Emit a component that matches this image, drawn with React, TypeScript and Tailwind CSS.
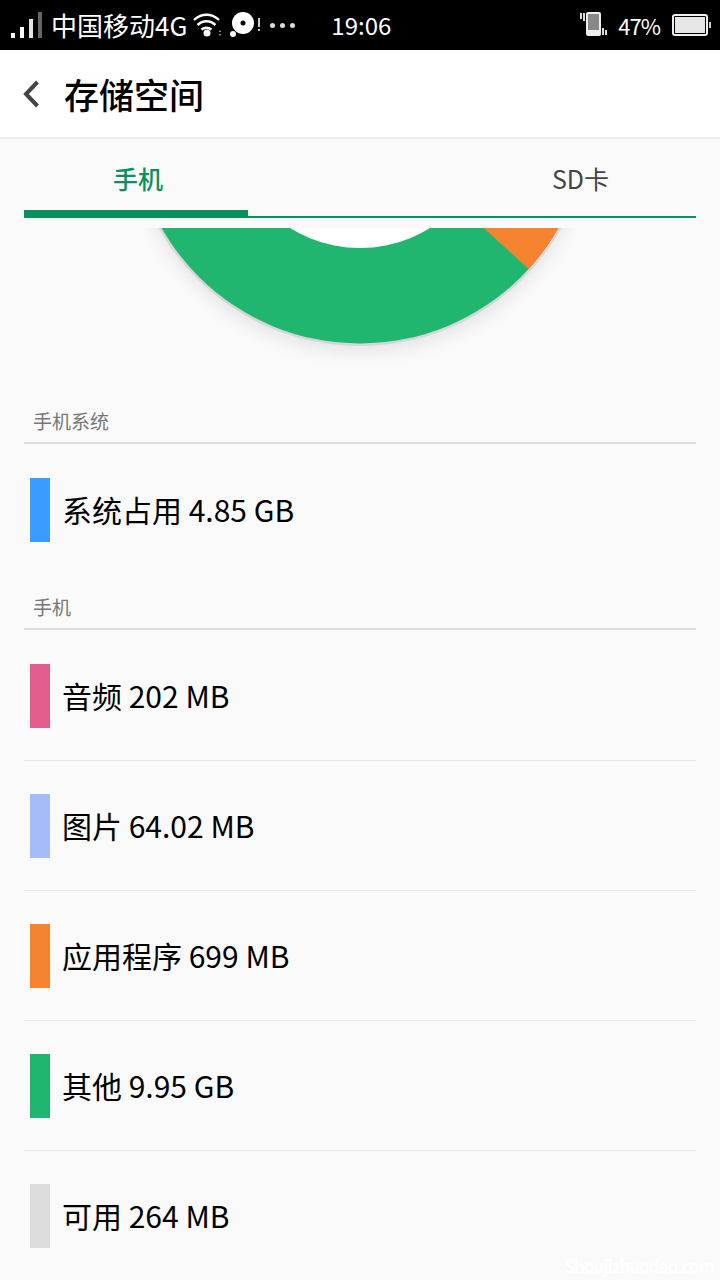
import React from 'react';

const rows = [
  { color: 'bg-[#e55d8e]', label: '音频 202 MB' },
  { color: 'bg-[#a4bdfa]', label: '图片 64.02 MB' },
  { color: 'bg-[#f5822f]', label: '应用程序 699 MB' },
  { color: 'bg-[#20b66f]', label: '其他 9.95 GB' },
  { color: 'bg-[#dcdcdc]', label: '可用 264 MB' },
];

const Swatch = ({ color, label }: { color: string; label: string }) => (
  <div className="flex h-16 items-center">
    <span className={`h-16 w-5 ${color}`} />
    <span className="ml-[12px] pb-[3px] text-[30px] leading-none text-black">{label}</span>
  </div>
);

const SectionTitle = ({ text }: { text: string }) => (
  <div className="flex h-[44px] items-center border-b-2 border-[#dedede] pl-[9px] text-[19px] text-[#777]">{text}</div>
);

const StatusBar = () => (
  <div className="flex h-[50px] items-center bg-black pl-[11px] pr-[9px] text-white">
    <svg width="32" height="26" viewBox="0 0 32 26">
      <rect x="0" y="21" width="4" height="5" fill="#fff" />
      <rect x="9" y="15" width="4" height="11" fill="#fff" />
      <rect x="18" y="7" width="4" height="19" fill="#e4e4e4" />
      <rect x="27" y="0" width="4" height="26" fill="#666" />
    </svg>
    <span className="ml-[8px] text-[26px] leading-none">中国移动4G</span>
    <svg className="ml-[6px]" width="30" height="26" viewBox="0 0 30 26" fill="none" stroke="#fff" strokeWidth="2.4">
      <path d="M1 8 C8 1 19 1 26 8" />
      <path d="M4.500 13 C10 8 17 8 22.500 13" />
      <path d="M8.500 17.500 C12 15 15 15 18.500 17.500" />
      <circle cx="14" cy="21" r="3.500" fill="#fff" stroke="none" />
      <path d="M27 18 L25.500 20 L28.500 20 Z M25.500 22 L28.500 22 L27 24 Z" fill="#888" stroke="none" />
    </svg>
    <svg className="ml-[7px]" width="32" height="26" viewBox="0 0 32 26">
      <circle cx="13" cy="11" r="11" fill="#fff" />
      <circle cx="13" cy="11" r="2.500" fill="#000" />
      <circle cx="3" cy="22" r="3" fill="#fff" />
      <rect x="28" y="6" width="2" height="9" fill="#ccc" />
      <rect x="28" y="17" width="2" height="2" fill="#ccc" />
    </svg>
    <span className="ml-[8px] flex gap-[5px]">
      <span className="size-[5px] rounded-full bg-[#ddd]" />
      <span className="size-[5px] rounded-full bg-[#ddd]" />
      <span className="size-[5px] rounded-full bg-[#ddd]" />
    </span>
    <span className="ml-[36px] text-[24px] leading-none">19:06</span>
    <svg className="ml-auto" width="28" height="26" viewBox="0 0 28 26">
      <rect x="0" y="1" width="2" height="6" fill="#ddd" />
      <rect x="3" y="1" width="2" height="8" fill="#ddd" />
      <rect x="6" y="0" width="15" height="24" rx="2" fill="#eee" />
      <rect x="8" y="2" width="11" height="16" fill="#888" />
      <rect x="22" y="16" width="2" height="7" fill="#ddd" />
      <rect x="25" y="18" width="2" height="5" fill="#ddd" />
    </svg>
    <span className="ml-[10px] text-[22px] leading-none tracking-[-1px]">47%</span>
    <svg className="ml-[12px]" width="39" height="24" viewBox="0 0 39 24">
      <rect x="1" y="2" width="34" height="20" rx="2" fill="#000" stroke="#eee" strokeWidth="2" />
      <rect x="3" y="4" width="30" height="16" fill="#e6e6e6" />
      <rect x="37" y="9" width="2" height="6" fill="#ccc" />
    </svg>
  </div>
);

const Chart = () => (
  <svg width="720" height="172" viewBox="0 228 720 172" className="block">
    <defs>
      <filter id="soft" x="-20%" y="-20%" width="140%" height="140%">
        <feGaussianBlur stdDeviation="10" />
      </filter>
    </defs>
    <circle cx="360" cy="121" r="229" fill="#000" opacity="0.1" filter="url(#soft)" />
    <circle cx="360" cy="115.500" r="230.500" fill="#d6d6d6" />
    <circle cx="360" cy="115.500" r="228" fill="#20b66f" />
    <path d="M360 115.500 L528.600 269 A228 228 0 0 0 588 115.500 Z" fill="#f5822f" />
    <circle cx="360" cy="115.500" r="132.500" fill="#fff" />
  </svg>
);

export default function App() {
  return (
    <div className="relative h-[1280px] w-[720px] overflow-hidden bg-[#fafafa] font-['Noto_Sans_CJK_SC','Liberation_Sans',sans-serif]">
      <StatusBar />
      <div className="flex h-[89px] items-center border-b-2 border-[#ececec] bg-white pl-[23px]">
        <svg width="18" height="28" viewBox="0 0 18 28" fill="none" stroke="#444" strokeWidth="4">
          <path d="M14.500 2 L3 14 L14.500 26" />
        </svg>
        <h1 className="ml-[23px] text-[35px] font-medium leading-none text-black">存储空间</h1>
      </div>
      <div className="px-[24px]">
        <div className="flex h-[79px] border-b-2 border-[#0a8f5f]">
          <div className="relative flex w-[224px] items-center justify-center pl-[4px] pt-[3px] text-[25px] font-medium text-[#0a8f5f]">
            手机
            <span className="absolute inset-x-0 -bottom-[2px] h-2 bg-[#0a8f5f]" />
          </div>
          <div className="flex flex-1 items-center justify-end pr-[87px] pt-[3px] text-[25px] text-[#444]">SD卡</div>
        </div>
      </div>
      <div className="h-[10px]" />
      <Chart />
      <div className="px-[24px]">
        <SectionTitle text="手机系统" />
        <div className="h-[142px] pl-[6px] pt-[34px]">
          <Swatch color="bg-[#3a9cff]" label="系统占用 4.85 GB" />
        </div>
        <SectionTitle text="手机" />
        <div className="h-[1px]" />
        {rows.map((r, i) => (
          <div key={r.label} className={`h-[130px] pl-[6px] pt-[33px] ${i < rows.length - 1 ? 'border-b border-[#e8e8e8]' : ''}`}>
            <Swatch color={r.color} label={r.label} />
          </div>
        ))}
      </div>
      <span className="absolute bottom-[6px] right-[6px] text-[17px] font-bold leading-none tracking-[-1px] text-white">Shoujizhuodao.com</span>
    </div>
  );
}
